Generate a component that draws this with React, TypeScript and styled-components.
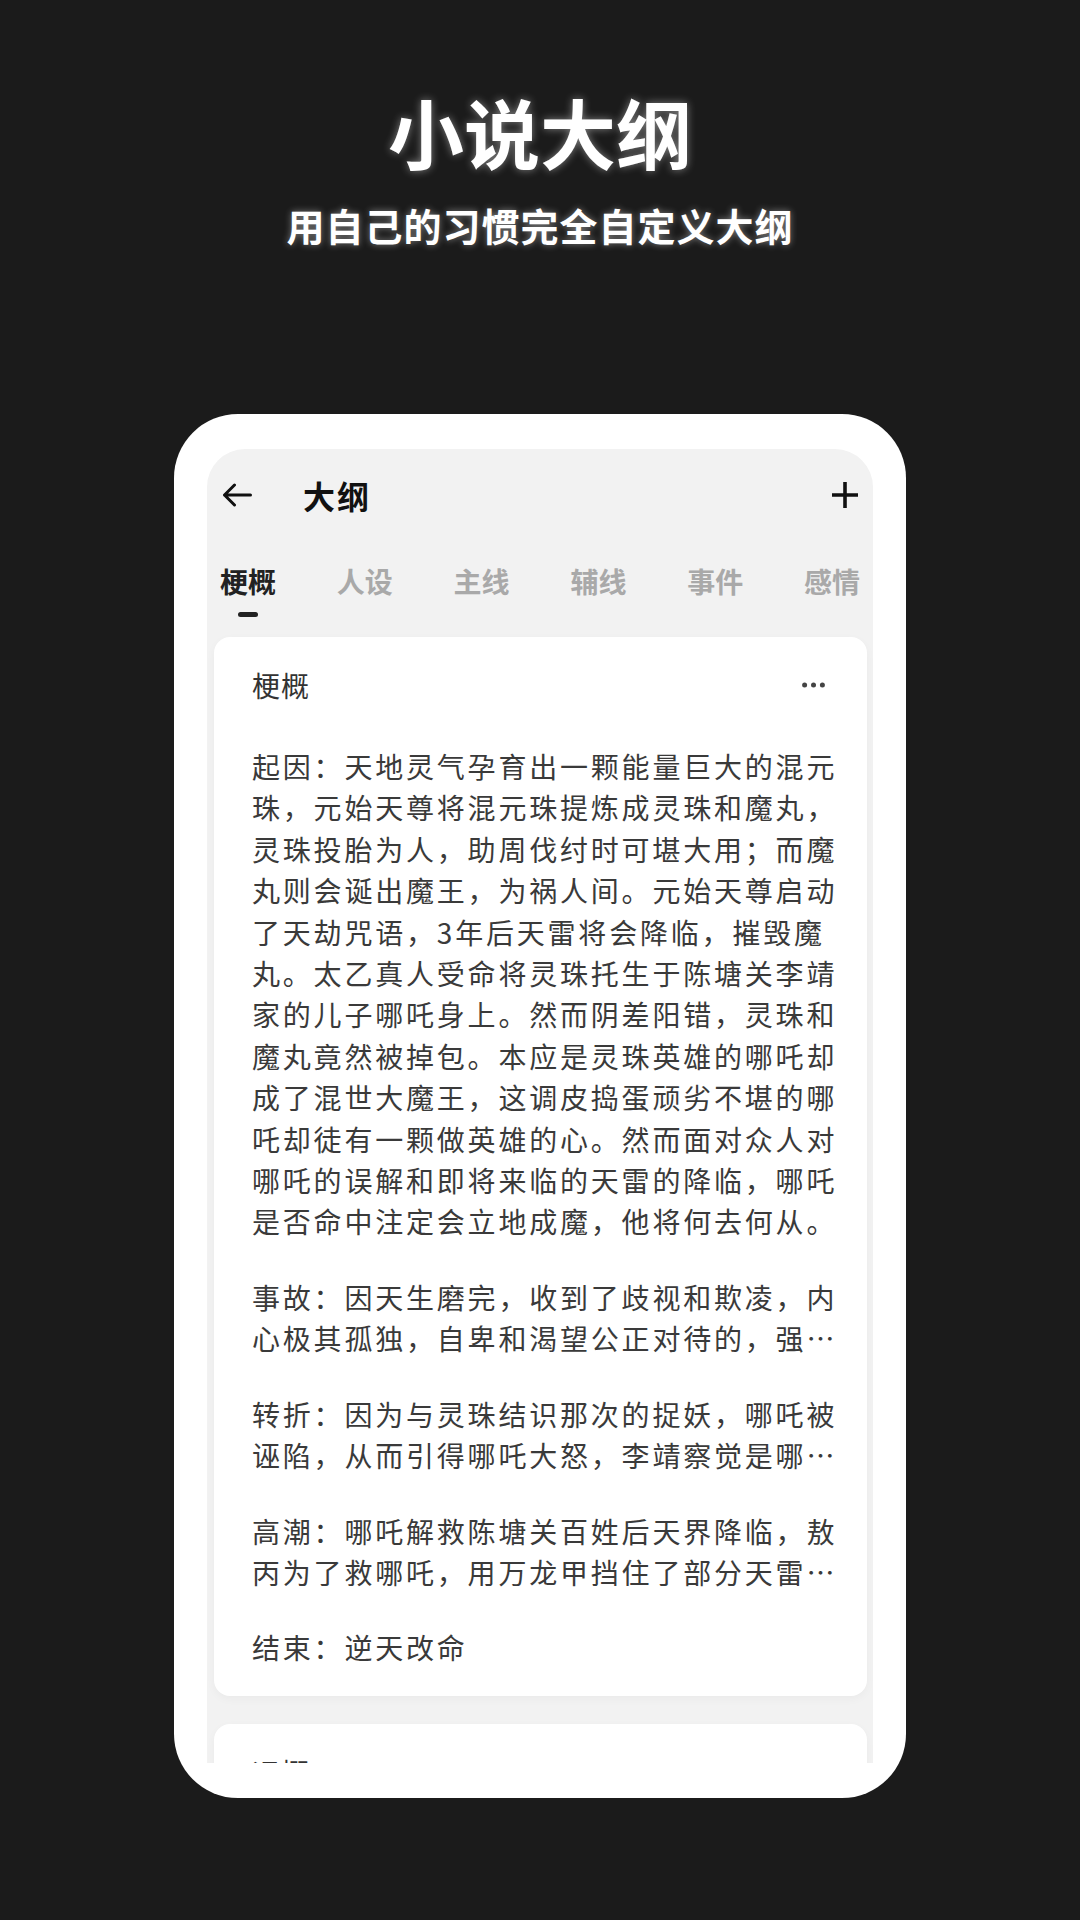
import React from "react";
import styled, { createGlobalStyle } from "styled-components";

const GlobalStyle = createGlobalStyle`
  html, body {
    margin: 0;
    padding: 0;
    background: #1b1b1b;
  }
  body {
    font-family: "Noto Sans CJK SC", "Noto Sans", sans-serif;
    -webkit-font-smoothing: antialiased;
  }
  * { box-sizing: border-box; }
`;

const Page = styled.div`
  width: 1080px;
  height: 1920px;
  background: #1b1b1b;
  display: flex;
  flex-direction: column;
  align-items: center;
  padding-top: 93px;
  overflow: hidden;
`;

const HeroTitle = styled.h1`
  margin: 0;
  font-size: 76px;
  line-height: 76px;
  font-weight: 700;
  color: #ffffff;
  text-shadow: 0 0 8px rgba(255, 255, 255, 0.45);
`;

const HeroSub = styled.h2`
  margin: 37px 0 0;
  font-size: 38px;
  line-height: 38px;
  font-weight: 700;
  letter-spacing: 1px;
  color: #ffffff;
  text-shadow: 0 0 7px rgba(255, 255, 255, 0.45);
`;

const Frame = styled.div`
  margin-top: 170px;
  width: 732px;
  height: 1384px;
  background: #ffffff;
  border-radius: 64px;
  padding: 35px 33px;
  overflow: hidden;
`;

const Screen = styled.div`
  width: 666px;
  height: 1314px;
  background: #f2f2f2;
  border-radius: 38px 38px 0 0;
  overflow: hidden;
  display: flex;
  flex-direction: column;
`;

const TopBar = styled.div`
  height: 92px;
  flex: none;
  display: flex;
  align-items: center;
  padding: 0 14px 0 15px;
`;

const IconButton = styled.span`
  display: flex;
  align-items: center;
  justify-content: center;
  color: #111111;
`;

const BarTitle = styled.div`
  margin-left: 51px;
  flex: 1;
  font-size: 32px;
  line-height: 40px;
  font-weight: 700;
  letter-spacing: 2px;
  color: #111111;
`;

const Tabs = styled.div`
  flex: none;
  display: flex;
  justify-content: space-between;
  padding: 20px 13px 0 13px;
`;

const Tab = styled.div<{ $active?: boolean }>`
  display: flex;
  flex-direction: column;
  align-items: center;
  gap: 11px;
  font-size: 28px;
  line-height: 40px;
  font-weight: 700;
  color: ${(p) => (p.$active ? "#222222" : "#a9a9a9")};

  &::after {
    content: "";
    width: 20px;
    height: 5px;
    border-radius: 3px;
    background: ${(p) => (p.$active ? "#222222" : "transparent")};
  }
`;

const Card = styled.div<{ $first?: boolean }>`
  flex: none;
  margin: ${(p) => (p.$first ? "20px" : "28px")} 6px 0 7px;
  background: #ffffff;
  border-radius: 16px;
  padding: 28px 20px 27px 38px;
  box-shadow: 0 3px 10px rgba(0, 0, 0, 0.035);
`;

const CardHead = styled.div`
  display: flex;
  align-items: center;
  justify-content: space-between;
  padding-right: 22px;
`;

const CardTitle = styled.div`
  font-size: 28px;
  line-height: 40px;
  letter-spacing: 1px;
  color: #333333;
`;

const Body = styled.div`
  margin-top: 41px;
  display: flex;
  flex-direction: column;
  gap: 34px;
`;

const Para = styled.p<{ $clamp?: boolean }>`
  margin: 0;
  font-size: 28px;
  line-height: 41.4px;
  letter-spacing: 2.8px;
  color: #3a3a3a;
  ${(p) =>
    p.$clamp
      ? `
    display: -webkit-box;
    -webkit-line-clamp: 2;
    -webkit-box-orient: vertical;
    overflow: hidden;
  `
      : ""}
`;

const BackIcon = () => (
  <svg width="30" height="24" viewBox="0 0 30 24" fill="none">
    <path
      d="M28.5 12H2.5M12.5 2L2.5 12L12.5 22"
      stroke="currentColor"
      strokeWidth="3"
      strokeLinecap="round"
      strokeLinejoin="round"
    />
  </svg>
);

const PlusIcon = () => (
  <svg width="28" height="28" viewBox="0 0 28 28" fill="none">
    <path d="M14 1V27M1 14H27" stroke="currentColor" strokeWidth="3.6" />
  </svg>
);

const MoreIcon = () => (
  <svg width="23" height="6" viewBox="0 0 23 6" fill="#444444">
    <circle cx="2.6" cy="3" r="2.5" />
    <circle cx="11.5" cy="3" r="2.5" />
    <circle cx="20.4" cy="3" r="2.5" />
  </svg>
);

const tabs = ["梗概", "人设", "主线", "辅线", "事件", "感情"];

const paragraphs: { text: string; clamp?: boolean }[] = [
  {
    text: "起因：天地灵气孕育出一颗能量巨大的混元珠，元始天尊将混元珠提炼成灵珠和魔丸，灵珠投胎为人，助周伐纣时可堪大用；而魔丸则会诞出魔王，为祸人间。元始天尊启动了天劫咒语，3年后天雷将会降临，摧毁魔丸。太乙真人受命将灵珠托生于陈塘关李靖家的儿子哪吒身上。然而阴差阳错，灵珠和魔丸竟然被掉包。本应是灵珠英雄的哪吒却成了混世大魔王，这调皮捣蛋顽劣不堪的哪吒却徒有一颗做英雄的心。然而面对众人对哪吒的误解和即将来临的天雷的降临，哪吒是否命中注定会立地成魔，他将何去何从。",
  },
  {
    text: "事故：因天生磨完，收到了歧视和欺凌，内心极其孤独，自卑和渴望公正对待的，强烈的自尊心让他变得越来越叛逆。",
    clamp: true,
  },
  {
    text: "转折：因为与灵珠结识那次的捉妖，哪吒被诬陷，从而引得哪吒大怒，李靖察觉是哪吒被冤枉，决心为他正名。",
    clamp: true,
  },
  {
    text: "高潮：哪吒解救陈塘关百姓后天界降临，敖丙为了救哪吒，用万龙甲挡住了部分天雷，两人合力对抗天劫。",
    clamp: true,
  },
  { text: "结束：逆天改命" },
];

export default function App() {
  return (
    <>
      <GlobalStyle />
      <Page>
        <HeroTitle>小说大纲</HeroTitle>
        <HeroSub>用自己的习惯完全自定义大纲</HeroSub>
        <Frame>
          <Screen>
            <TopBar>
              <IconButton>
                <BackIcon />
              </IconButton>
              <BarTitle>大纲</BarTitle>
              <IconButton>
                <PlusIcon />
              </IconButton>
            </TopBar>
            <Tabs>
              {tabs.map((t, i) => (
                <Tab key={t} $active={i === 0}>
                  {t}
                </Tab>
              ))}
            </Tabs>
            <Card $first>
              <CardHead>
                <CardTitle>梗概</CardTitle>
                <MoreIcon />
              </CardHead>
              <Body>
                {paragraphs.map((p, i) => (
                  <Para key={i} $clamp={p.clamp}>
                    {p.text}
                  </Para>
                ))}
              </Body>
            </Card>
            <Card>
              <CardHead>
                <CardTitle>运概</CardTitle>
                <MoreIcon />
              </CardHead>
            </Card>
          </Screen>
        </Frame>
      </Page>
    </>
  );
}
